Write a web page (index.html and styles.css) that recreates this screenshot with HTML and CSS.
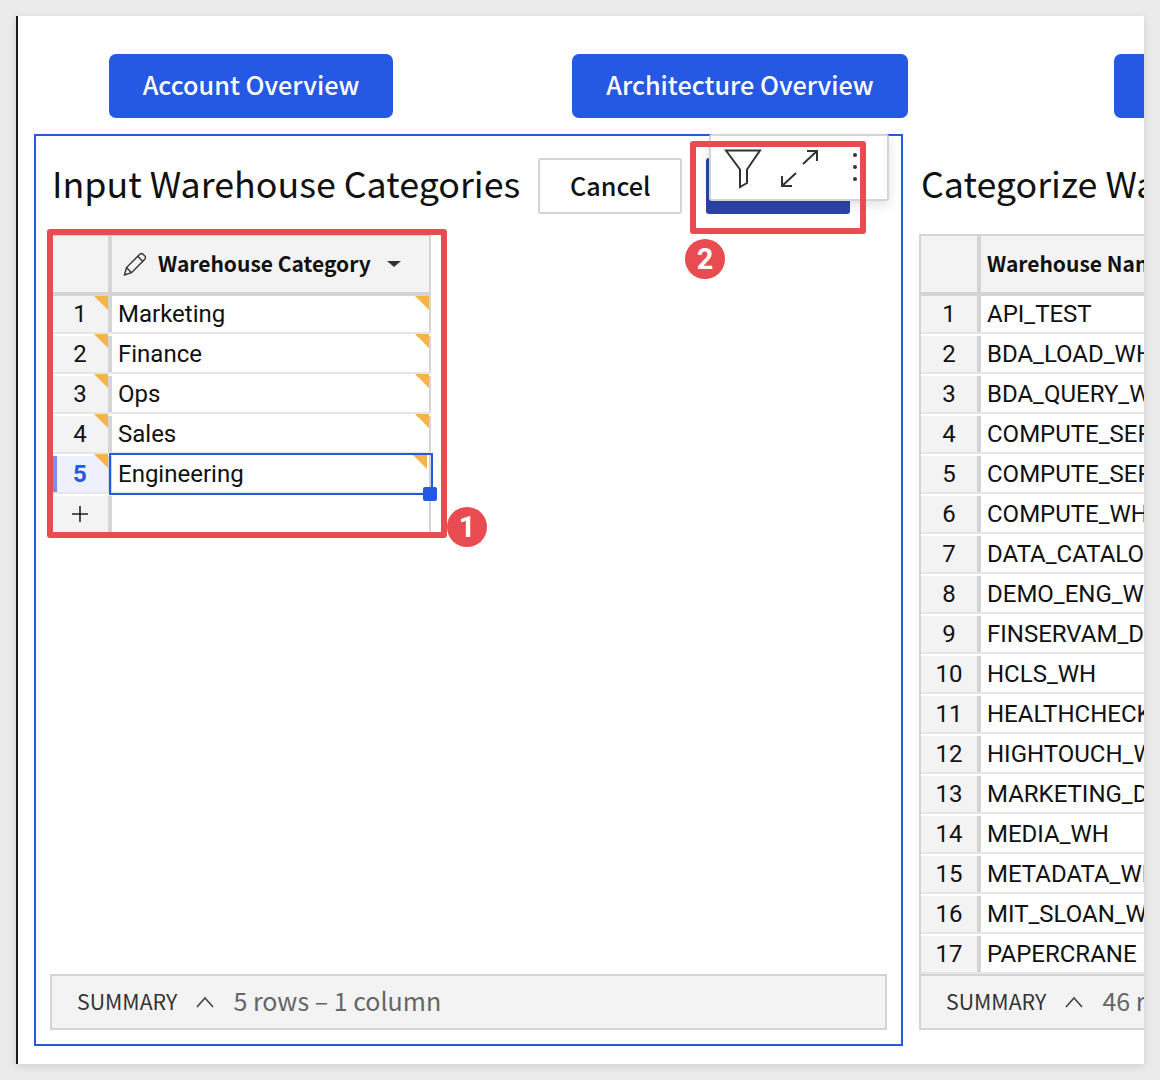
FILE: index.html
```html
<!DOCTYPE html>
<html>
<head>
  <meta charset="utf-8">
  <title>Input Warehouse Categories</title>
  <link rel="stylesheet" href="styles.css">
</head>
<body>
  <div class="frame">
    <div class="nav">
      <a class="nav-btn nav-account">Account Overview</a>
      <a class="nav-btn nav-arch">Architecture Overview</a>
      <a class="nav-btn nav-next">Warehouse Overview</a>
    </div>

    <div class="panels">
      <!-- input table -->
      <section class="panel">
        <div class="panel-head">
          <h2 class="panel-title">Input Warehouse Categories</h2>
          <button type="button" class="btn-cancel">Cancel</button>
          <button type="button" class="btn-save"></button>
        </div>
        <div class="table-wrap">
          <div class="grid grid-input">
            <div class="grid-header">
              <div class="idx"></div>
              <div class="col-head">
                <svg class="icon-pencil" width="24" height="24" viewBox="0 0 24 24">
                  <path d="M1.5 23l2-7.5L16.8 2.2q1.7-1.4 3.300 0l1.700 1.700q1.400 1.700 0 3.300L8.500 20.700z" />
                  <path d="M3.500 15.500l5 5.200M14.800 4.200l5 5.200" />
                </svg>
                <span class="col-name">Warehouse Category</span>
                <span class="caret"></span>
              </div>
            </div>
            <div class="row"><div class="idx flag">1</div><div class="cell flag">Marketing</div></div>
            <div class="row"><div class="idx flag">2</div><div class="cell flag">Finance</div></div>
            <div class="row"><div class="idx flag">3</div><div class="cell flag">Ops</div></div>
            <div class="row"><div class="idx flag">4</div><div class="cell flag">Sales</div></div>
            <div class="row row-active"><div class="idx flag">5</div><div class="cell flag">Engineering<span class="handle"></span></div></div>
            <div class="row row-add">
              <div class="idx">
                <svg width="18" height="18" viewBox="0 0 18 18"><path d="M9 1v16M1 9h16" /></svg>
              </div>
              <div class="cell"></div>
            </div>
          </div>
        </div>
        <div class="summary">
          <span class="summary-label">SUMMARY</span>
          <svg class="chevron" width="18" height="12" viewBox="0 0 18 12"><path d="M1 11l8-9 8 9" /></svg>
          <span class="summary-count">5 rows – 1 column</span>
        </div>
      </section>

      <!-- warehouse list -->
      <section class="panel panel-plain">
        <div class="panel-head">
          <h2 class="panel-title">Categorize Warehouses</h2>
        </div>
        <div class="table-wrap">
          <div class="grid grid-list">
            <div class="grid-header">
              <div class="idx"></div>
              <div class="col-head col-head-plain"><span class="col-name">Warehouse Name</span></div>
            </div>
            <div class="row"><div class="idx">1</div><div class="cell">API_TEST</div></div>
            <div class="row"><div class="idx">2</div><div class="cell">BDA_LOAD_WH</div></div>
            <div class="row"><div class="idx">3</div><div class="cell">BDA_QUERY_WH</div></div>
            <div class="row"><div class="idx">4</div><div class="cell">COMPUTE_SERVICE_WH</div></div>
            <div class="row"><div class="idx">5</div><div class="cell">COMPUTE_SERVICE_WH_2</div></div>
            <div class="row"><div class="idx">6</div><div class="cell">COMPUTE_WH</div></div>
            <div class="row"><div class="idx">7</div><div class="cell">DATA_CATALOG_WH</div></div>
            <div class="row"><div class="idx">8</div><div class="cell">DEMO_ENG_WH</div></div>
            <div class="row"><div class="idx">9</div><div class="cell">FINSERVAM_DEV_WH</div></div>
            <div class="row"><div class="idx">10</div><div class="cell">HCLS_WH</div></div>
            <div class="row"><div class="idx">11</div><div class="cell">HEALTHCHECK_WH</div></div>
            <div class="row"><div class="idx">12</div><div class="cell">HIGHTOUCH_WH</div></div>
            <div class="row"><div class="idx">13</div><div class="cell">MARKETING_DEV_WH</div></div>
            <div class="row"><div class="idx">14</div><div class="cell">MEDIA_WH</div></div>
            <div class="row"><div class="idx">15</div><div class="cell">METADATA_WH</div></div>
            <div class="row"><div class="idx">16</div><div class="cell">MIT_SLOAN_WH</div></div>
            <div class="row"><div class="idx">17</div><div class="cell">PAPERCRANE</div></div>
          </div>
        </div>
        <div class="summary">
          <span class="summary-label">SUMMARY</span>
          <svg class="chevron" width="18" height="12" viewBox="0 0 18 12"><path d="M1 11l8-9 8 9" /></svg>
          <span class="summary-count">46 rows – 4 columns</span>
        </div>
      </section>
    </div>

    <!-- floating toolbar over the save button -->
    <div class="popover">
      <svg class="icon-filter" width="38" height="42" viewBox="0 0 38 42">
        <path d="M2 2.500h34L23 21.500v13.500l-7 4V21.500z" />
      </svg>
      <svg class="icon-expand" width="38" height="38" viewBox="0 0 38 38">
        <path d="M23 14L37 1M27 1h10v10M2 36l14-13M2 26v10h10" />
      </svg>
      <div class="dots"><i></i><i></i><i></i></div>
    </div>

    <!-- screenshot annotations -->
    <div class="callout callout-table"></div>
    <div class="callout callout-toolbar"></div>
    <div class="badge badge-one">1</div>
    <div class="badge badge-two">2</div>
  </div>
</body>
</html>
```

FILE: styles.css
```css
* {
  box-sizing: border-box;
}

html,
body {
  height: 100%;
}

body {
  margin: 0;
  background: #ebebeb;
  overflow: hidden;
  font-family: "Noto Sans CJK SC", "Noto Sans", sans-serif;
  color: #111;
}

/* White page card, clipped on the right */
.frame {
  position: relative;
  width: 1128px;
  height: 1048px;
  margin: 16px 0 0 16px;
  background: #fff;
  border-left: 2px solid #1c1a1c;
  box-shadow: 0 2px 8px rgba(0, 0, 0, 0.12);
  overflow: hidden;
}

/* Top buttons */
.nav {
  display: flex;
  height: 102px;
  padding-top: 38px;
  white-space: nowrap;
}

.nav-btn {
  flex: none;
  display: flex;
  align-items: center;
  justify-content: center;
  height: 64px;
  padding-bottom: 4px;
  background: #2558e3;
  border-radius: 7px;
  color: #fff;
  font-size: 25.2px;
  font-weight: 500;
}

.nav-account {
  width: 284px;
  margin-left: 91px;
}

.nav-arch {
  width: 336px;
  margin-left: 179px;
}

.nav-next {
  width: 336px;
  margin-left: 206px;
}

/* Panels */
.panels {
  display: flex;
  margin-top: 16px;
  margin-left: 16px;
  height: 912px;
}

.panel {
  flex: none;
  display: flex;
  flex-direction: column;
  width: 869px;
  height: 912px;
  padding: 0 14px 14px;
  border: 2px solid #2558e3;
}

.panel-plain {
  border-color: transparent;
}

.panel-head {
  flex: none;
  display: flex;
  align-items: center;
  height: 98px;
  padding-left: 2px;
}

.panel-title {
  margin: 0 0 7px;
  font-size: 35.8px;
  font-weight: 400;
  white-space: nowrap;
}

.btn-cancel,
.btn-save {
  flex: none;
  width: 144px;
  height: 56px;
  margin-top: 2px;
  border-radius: 3px;
  font-family: inherit;
}

.btn-cancel {
  margin-left: 18px;
  padding: 0 0 2px;
  background: #fff;
  border: 2px solid #d4d4d4;
  font-size: 25.2px;
  font-weight: 500;
  color: #111;
}

.btn-save {
  margin-left: 24px;
  background: #2a44a8;
  border: none;
}

/* Tables */
.table-wrap {
  flex: 1;
  min-height: 0;
  overflow: hidden;
}

.grid {
  border-left: 2px solid #d4d4d4;
  border-top: 2px solid #d4d4d4;
}

.grid-input {
  width: 381px;
}

.grid-list {
  width: 800px;
}

.grid-header {
  display: flex;
  height: 60px;
  border-bottom: 4px solid #d4d4d4;
  background: #f3f3f3;
}

.idx {
  position: relative;
  flex: none;
  display: flex;
  align-items: center;
  justify-content: center;
  width: 60px;
  background: #f3f3f3;
  border-right: 4px solid #d4d4d4;
}

.col-head {
  flex: 1;
  display: flex;
  align-items: center;
  padding-left: 11px;
  border-right: 2px solid #d4d4d4;
  font-size: 21px;
  font-weight: 700;
}

.col-head-plain {
  padding-left: 6px;
  border-right: none;
}

.col-name {
  white-space: nowrap;
  padding-bottom: 3px;
}

.icon-pencil {
  flex: none;
  margin-right: 11px;
}

.icon-pencil path {
  fill: none;
  stroke: #333;
  stroke-width: 1.4;
}

.caret {
  flex: none;
  width: 0;
  height: 0;
  margin-left: 16px;
  border-left: 7px solid transparent;
  border-right: 7px solid transparent;
  border-top: 6px solid #333;
}

.row {
  display: flex;
  height: 38px;
  border-bottom: 2px solid #e6e6e6;
  font-family: Roboto, sans-serif;
  font-size: 24px;
}

.row + .row {
  height: 40px;
  padding-top: 2px;
}

.cell {
  position: relative;
  flex: 1;
  display: flex;
  align-items: center;
  padding-left: 6px;
  white-space: nowrap;
}

.grid-input .cell {
  border-right: 2px solid #d4d4d4;
}

/* Edited-value corner flag */
.flag::after {
  content: "";
  position: absolute;
  top: 0;
  right: 0;
  width: 14px;
  height: 14px;
  background: #f5b445;
  clip-path: polygon(0 0, 100% 0, 100% 100%);
}

.row + .row .flag::after {
  top: -2px;
}

.row-active .idx {
  background: #eef0fd;
  color: #2558e3;
  font-weight: 700;
  box-shadow: inset 5px 0 0 #7f8ae9;
}

.row-active .cell {
  outline: 2px solid #2558e3;
  outline-offset: 0;
  margin: -1px 0 -1px -1px;
  padding: 0 0 1px 7px;
}

.row + .row-active .cell::after {
  top: 0;
  right: 2px;
}

.handle {
  position: absolute;
  right: -8px;
  bottom: -8px;
  width: 14px;
  height: 14px;
  background: #2558e3;
  border-radius: 2px;
  z-index: 1;
}

.row-add {
  border-bottom: none;
}

.row-add .idx {
  padding-bottom: 2px;
}

.row-add svg path {
  fill: none;
  stroke: #222;
  stroke-width: 1.6;
}

/* Summary bar */
.summary {
  flex: none;
  display: flex;
  align-items: center;
  height: 56px;
  padding-left: 25px;
  background: #f3f3f3;
  border: 2px solid #d4d4d4;
  white-space: nowrap;
}

.summary-label {
  font-size: 21.3px;
  color: #333;
  padding-bottom: 4px;
}

.chevron {
  margin: 0 19px 0 19px;
}

.chevron path {
  fill: none;
  stroke: #444;
  stroke-width: 1.6;
}

.summary-count {
  font-size: 25px;
  color: #666;
  padding-bottom: 5px;
}

/* Hover toolbar */
.popover {
  position: absolute;
  left: 691px;
  top: 118px;
  display: flex;
  align-items: flex-start;
  width: 180px;
  height: 67px;
  padding: 12px 0 0 13px;
  background: #fff;
  border: 2px solid #d4d4d4;
  border-radius: 3px;
  box-shadow: 0 4px 12px rgba(0, 0, 0, 0.12);
}

.icon-filter path,
.icon-expand path {
  fill: none;
  stroke: #333;
  stroke-width: 2;
}

.icon-expand {
  margin: 2px 0 0 18px;
}

.dots {
  display: flex;
  flex-direction: column;
  gap: 8px;
  margin: 5px 0 0 35px;
}

.dots i {
  display: block;
  width: 4px;
  height: 4px;
  background: #333;
  border-radius: 50%;
}

/* Red annotations */
.callout {
  position: absolute;
  border: 6px solid #e84c50;
  border-radius: 3px;
}

.callout-table {
  left: 29px;
  top: 213px;
  width: 400px;
  height: 309px;
}

.callout-toolbar {
  left: 672px;
  top: 125px;
  width: 176px;
  height: 93px;
}

.badge {
  position: absolute;
  display: flex;
  align-items: center;
  justify-content: center;
  width: 40px;
  height: 40px;
  background: #e84c50;
  border-radius: 50%;
  color: #fff;
  font-family: Roboto, sans-serif;
  font-size: 29px;
  font-weight: 700;
}

.badge-one {
  left: 429px;
  top: 491px;
}

.badge-two {
  left: 667px;
  top: 223px;
}
```
